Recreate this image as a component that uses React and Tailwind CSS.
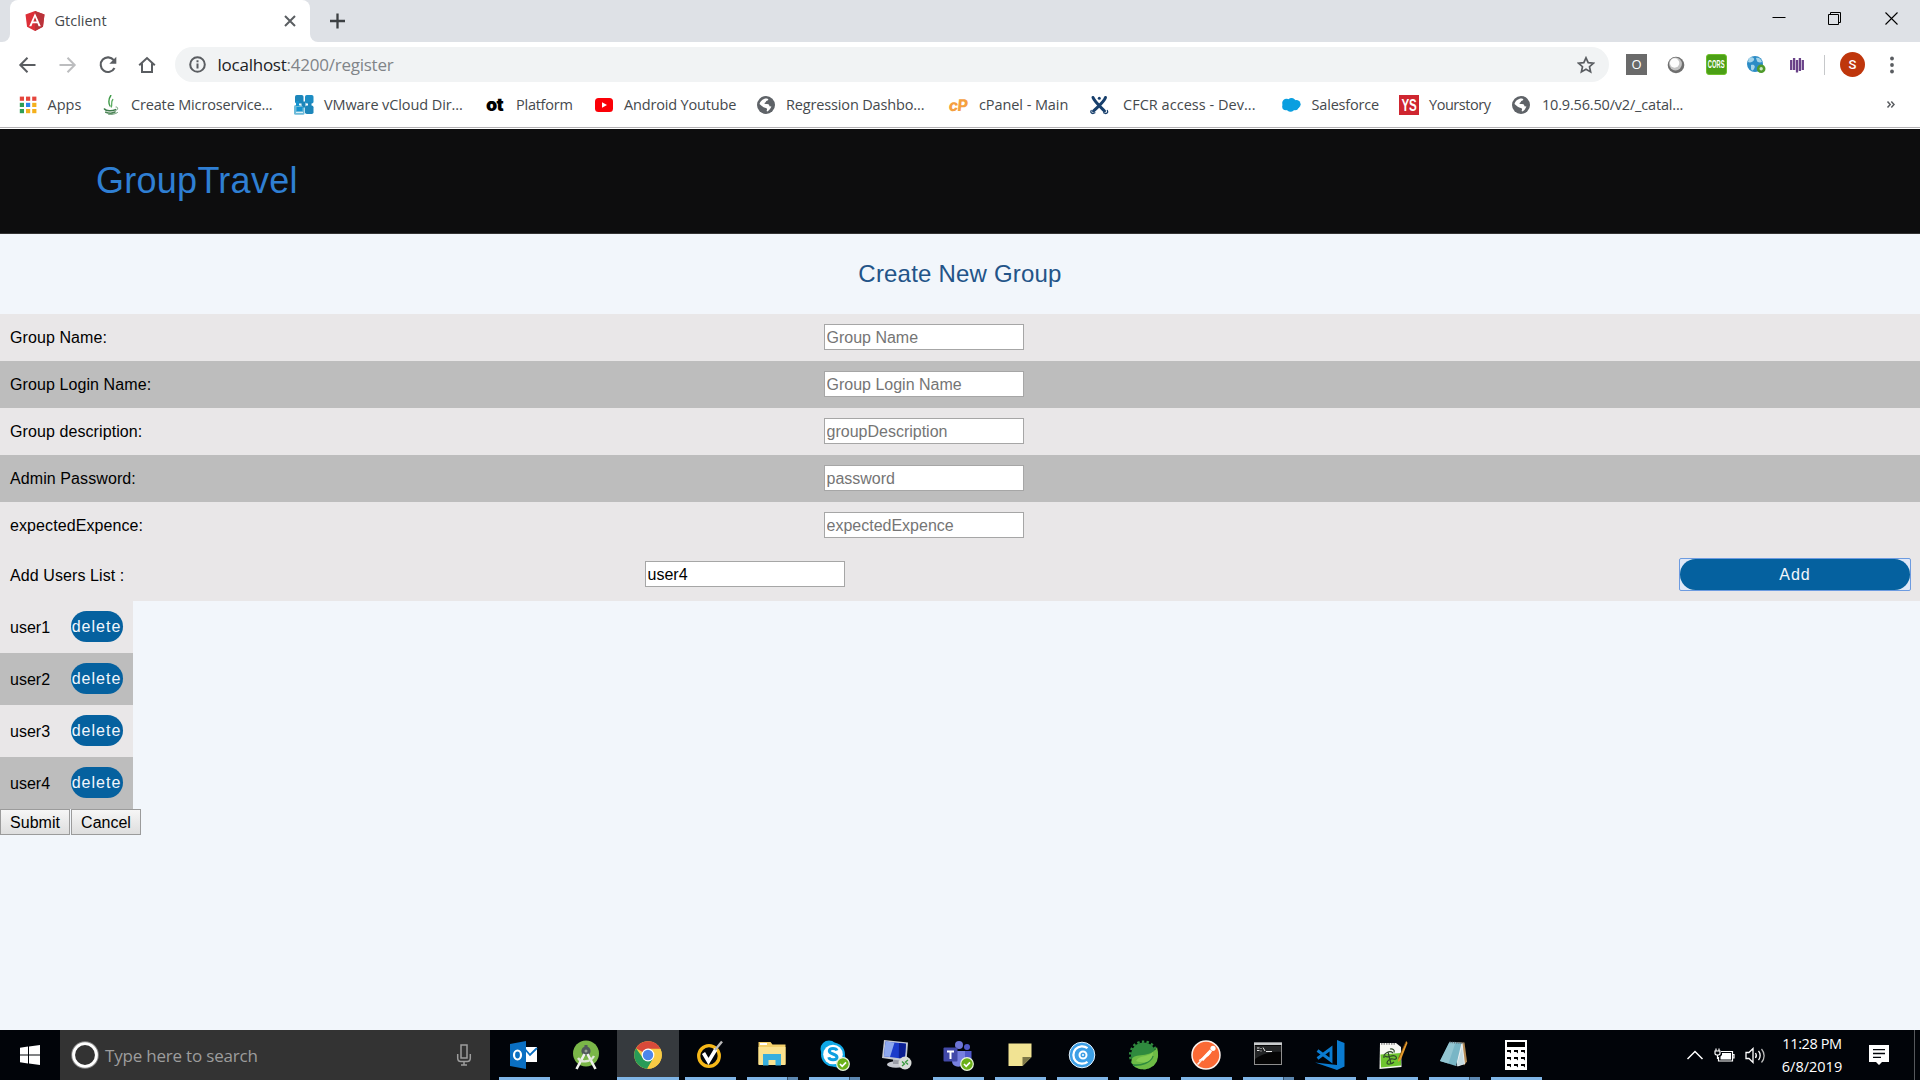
import React from "react";

const SEGOE = "font-['Open_Sans','Noto_Sans',sans-serif]";
const ARIAL = "font-['Liberation_Sans',Arial,sans-serif]";

/* ---------- bookmark icons (20 x 20) ---------- */

const AppsIcon = () => (
  <svg width="20" height="20" viewBox="0 0 20 20" className="shrink-0">
    {[
      ["#e5463c", "#e5463c", "#e5463c"],
      ["#2f9e56", "#2d84ee", "#f4b01c"],
      ["#2f9e56", "#f4b01c", "#f4b01c"],
    ].map((row, r) => row.map((c, i) => <rect key={`${r}${i}`} x={1.8 + i * 6.2} y={1.6 + r * 6.2} width="4.200" height="4.200" fill={c} />))}
  </svg>
);
const JavaIcon = () => (
  <svg width="20" height="20" viewBox="0 0 20 20" fill="none" strokeLinecap="round" className="shrink-0">
    <path d="M9.800.5C7.200 4.500 7 7 9 11" strokeWidth="1.400" stroke="#3f9a48" />
    <path d="M11.800 4.500c-2.300 3-.3 4.500-1.500 7.500" strokeWidth="1.300" stroke="#5cae62" />
    <path d="M3.500 14c1.500 2 7.500 2.300 11 .6" strokeWidth="1.600" stroke="#3d7a4a" />
    <path d="M4.800 17.200c3 1.300 6.800 1.200 9.200-.2" strokeWidth="1.600" stroke="#4d8557" />
    <path d="M15 12c2.500-.3 2.300 2.700-.5 3.900M7.500 19.300c3.500.4 6.500 0 9-1.800" strokeWidth="1" stroke="#6d9c76" />
  </svg>
);
const VmwareIcon = () => (
  <svg width="20" height="20" viewBox="0 0 20 20" className="shrink-0">
    <rect x="1" y="0" width="8.500" height="8.500" rx="1.800" fill="#1d86ba" />
    <rect x="11" y="0" width="8.500" height="8.500" rx="1.800" fill="#1d8dc4" />
    <rect x="11" y="10.500" width="8.500" height="8.500" rx="1.800" fill="#1d86ba" />
    <rect x="0" y="10" width="10.500" height="9.700" rx="1.500" fill="#6dbbda" />
    <path d="M7.500 6.500h4v6h-4zM14 7h3.500v4H14z" fill="#1d86ba" />
    <path d="M2 6h3v5H2zM2.500 12h6v4h-6z" fill="#1593cf" />
    <path d="M2 17.500h7M6 9.500l2 2" stroke="#d9eef7" />
  </svg>
);
const YoutubeIcon = () => (
  <svg width="20" height="20" viewBox="0 0 20 20" className="shrink-0">
    <rect x="1" y="3" width="18" height="14" rx="3.500" fill="#fb0007" />
    <path d="M8 7.200v5.600l5-2.800z" fill="#fff" />
  </svg>
);
const GlobeIcon = () => (
  <svg width="20" height="20" viewBox="0 0 20 20" className="shrink-0">
    <circle cx="10" cy="10" r="9" fill="#5f6368" />
    <path d="M3.500 9C4.500 5.500 8 3 11.500 3.700c1.300.4.8 1.800-.6 2.100-1.200.3-.7 1.500-1.900 1.900-1.400.5-.2 1.600 1.600 1.400 2-.2 2.900.9 2.800 2.200l2 .3c-.5 1.200-1.500 3.400-3.600 4.700-.9.500-1.400-.3-.9-1.200.6-1.200-.4-2.200-1.900-2.300C7.500 12.600 5.500 10.500 3.500 9z" fill="#fff" />
    <path d="M14 5.500c1.500 1.300 2.200 2.600 2.300 4.300-1.300.1-2.600-.9-2.300-4.300z" fill="#5f6368" />
  </svg>
);
const JiraXIcon = () => (
  <svg width="20" height="20" viewBox="0 0 20 20" fill="none" stroke="#173f6c" strokeLinecap="round" className="shrink-0">
    <path d="M4 2.500c1.500 4 6.500 8.500 11.500 13.500M16.500 2.500C15 7 9.500 11 4.500 16" strokeWidth="3" />
    <circle cx="10.300" cy="3.200" r="1.500" fill="#173f6c" stroke="none" />
    <path d="M2.200 15.500c-1.500 2.700 1.500 3.700 3.700 2.300M18.300 15.500c1.500 2.700-1.500 3.700-3.700 2.300" strokeWidth="1.300" />
  </svg>
);
const CloudIcon = () => (
  <svg width="20" height="20" viewBox="0 0 20 20" fill="#0a9fe0" className="shrink-0">
    <circle cx="5.500" cy="8" r="4.300" /><circle cx="10.500" cy="7.200" r="4.200" /><circle cx="15.300" cy="9.200" r="4.300" />
    <circle cx="5" cy="11.500" r="3.800" /><circle cx="9.500" cy="12.500" r="4.300" /><circle cx="14" cy="11.500" r="3.700" />
  </svg>
);
const OtIcon = () => <span className="flex h-5 w-5 shrink-0 items-center justify-center pr-[3px] font-['Inter',sans-serif] text-[18px] leading-none font-black tracking-[-0.6px] text-black">ot</span>;
const CpIcon = () => <span className="flex h-5 w-5 shrink-0 items-center justify-center pr-[2px] font-['Inter',sans-serif] text-[16px] leading-none font-extrabold tracking-[-0.8px] text-[#f5a040]"><span className="-skew-x-6">cP</span></span>;
const YsIcon = () => (
  <span className="flex h-5 w-5 shrink-0 items-center justify-center bg-[#cf2630]">
    <span className="scale-x-[.68] font-['Liberation_Sans',sans-serif] text-[17px] leading-none font-bold text-white">YS</span>
  </span>
);

const bookmarks = [
  { t: "Apps", I: AppsIcon, cls: "w-[83px] gap-[9.500px] tracking-[0px]" },
  { t: "Create Microservice...", I: JavaIcon, cls: "w-[193px] gap-[10px] tracking-[-0.16px]" },
  { t: "VMware vCloud Dir...", I: VmwareIcon, cls: "w-[192px] gap-[10px] tracking-[-0.1px]" },
  { t: "Platform", I: OtIcon, cls: "w-[108px] gap-[10px] tracking-[-0.25px]" },
  { t: "Android Youtube", I: YoutubeIcon, cls: "w-[162px] gap-[10px] tracking-[-0.16px]" },
  { t: "Regression Dashbo...", I: GlobeIcon, cls: "w-[193px] gap-[10px] tracking-[-0.15px]" },
  { t: "cPanel - Main", I: CpIcon, cls: "w-[140px] gap-[10px] tracking-[-0.08px]" },
  { t: "CFCR access - Dev...", I: JiraXIcon, cls: "w-[192px] gap-[14px] tracking-[0.03px]" },
  { t: "Salesforce", I: CloudIcon, cls: "w-[118px] gap-[10.500px] tracking-[-0.18px]" },
  { t: "Yourstory", I: YsIcon, cls: "w-[112px] gap-[10px] tracking-[-0.45px]" },
  { t: "10.9.56.50/v2/_catal...", I: GlobeIcon, cls: "w-[200px] gap-[11px] tracking-[-0.18px]" },
];

/* ---------- browser chrome ---------- */

const AngularIcon = () => (
  <svg width="20" height="20" viewBox="0 0 20 20">
    <path d="M10 0l9.500 3.400L18 15.700 10 20l-8-4.300L.5 3.400z" fill="#dd2f38" />
    <path d="M10 0l9.500 3.400L18 15.700 10 20z" fill="#b9333a" />
    <path d="M10 2.300L4.200 15.200h2.200l1.200-2.900h4.800l1.200 2.900h2.200zm0 4l1.700 4.200H8.300z" fill="#fff" />
  </svg>
);

function TabStrip() {
  return (
    <div className="flex h-[42px] items-stretch bg-[#dee1e6]">
      <div className="w-[10px] bg-white"><div className="h-full rounded-br-lg bg-[#dee1e6]" /></div>
      <div className="flex w-[300px] items-center rounded-t-lg bg-white pl-[15px]">
        <AngularIcon />
        <span className="ml-[9.500px] grow text-[14.500px] leading-5 text-[#45494d]">Gtclient</span>
        <svg width="12" height="12" viewBox="0 0 12 12" className="mr-[14px]" stroke="#5a5e62" strokeWidth="2"><path d="M1 1l10 10M11 1L1 11" /></svg>
      </div>
      <div className="w-[10px] bg-white"><div className="h-full rounded-bl-lg bg-[#dee1e6]" /></div>
      <div className="flex grow items-center pl-[9px]">
        <svg width="16" height="16" viewBox="0 0 16 16" stroke="#3c4043" strokeWidth="2.300"><path d="M8.500 .5v15M1 8h15" /></svg>
      </div>
      <div className="flex h-[38px] items-center pr-[21px] text-black">
        <svg width="14" height="14" viewBox="0 0 14 14" className="mr-[42px]" stroke="currentColor"><path d="M.5 5.500h13" /></svg>
        <svg width="14" height="14" viewBox="0 0 14 14" className="mr-[43px]" fill="none" stroke="currentColor"><path d="M.5 2.500h10v10H.5zM2.500 2.500v-2h10v10h-2" /></svg>
        <svg width="14" height="14" viewBox="0 0 14 14" stroke="currentColor" strokeWidth="1.100"><path d="M.5 .5l12 12M12.500 .5l-12 12" /></svg>
      </div>
    </div>
  );
}

function Toolbar() {
  return (
    <div className="flex h-[45px] items-center bg-white">
      <svg width="18" height="18" viewBox="0 0 18 18" className="ml-[18px]" fill="none" stroke="#5a5d61" strokeWidth="2"><path d="M17.500 9H3M9.500 1.800L2.300 9l7.200 7.200" /></svg>
      <svg width="18" height="18" viewBox="0 0 18 18" className="ml-[23px]" fill="none" stroke="#bcbdbf" strokeWidth="2"><path d="M.5 9h15M8.500 1.800L15.700 9l-7.200 7.200" /></svg>
      <svg width="18" height="18" viewBox="0 0 18 18" className="ml-[22px]" fill="none" stroke="#5a5d61" strokeWidth="2.100">
        <path d="M14.800 4.200A7.300 7.300 0 1 0 15.500 12" />
        <path d="M17.300 .8v7h-7z" fill="#5a5d61" stroke="none" />
      </svg>
      <svg width="18" height="18" viewBox="0 0 18 18" className="ml-[21px]" fill="none" stroke="#5a5d61" strokeWidth="2"><path d="M1.200 9.300L9 2l7.800 7.300M4 7.500V16h10V7.500" /></svg>
      <div className="ml-[19px] flex h-[35px] w-[1434px] items-center rounded-full bg-[#f1f3f4] pr-[14px] pl-[14px]">
        <svg width="17" height="17" viewBox="0 0 17 17" fill="none" stroke="#5a5d61" strokeWidth="2"><circle cx="8.500" cy="8.500" r="7.300" /><path d="M8.500 7.500v5M8.500 4.300v2" /></svg>
        <span className="ml-[11.500px] grow text-[17px] leading-6 tracking-[-0.24px] text-[#808488]"><span className="text-[#202124]">localhost</span>:4200/register</span>
        <svg width="18" height="18" viewBox="0 0 18 18" fill="none" stroke="#5a5d61" strokeWidth="1.700"><path d="M9 1.800l2.200 4.900 5.200.5-3.900 3.500 1.100 5.200L9 13.200l-4.600 2.700 1.100-5.200L1.600 7.200l5.200-.5z" /></svg>
      </div>
      <span className="ml-[17px] flex h-[21px] w-[21px] items-center justify-center bg-[#6a6a6a] text-[13px] leading-none text-white">O</span>
      <svg width="18" height="18" viewBox="0 0 18 18" className="ml-[20px]">
        <circle cx="9" cy="9" r="8.300" fill="#6f6f6f" /><circle cx="8.500" cy="8" r="6.400" fill="#c4c4c4" /><circle cx="7.600" cy="7" r="4.700" fill="#fdfdfd" />
      </svg>
      <span className="ml-[21px] flex h-[21px] w-[21px] items-center justify-center rounded-[3px] border border-[#6fbf2c] bg-[#4ba015]">
        <span className="scale-x-[.55] font-['Liberation_Sans',sans-serif] text-[10.500px] leading-none font-bold text-white">CORS</span>
      </span>
      <svg width="20" height="20" viewBox="0 0 20 20" className="ml-[19px]">
        <circle cx="9" cy="9" r="8" fill="#2c8cc6" />
        <path d="M3 3c3-2 6 0 5 2S4 8 2 7zM10 3c3-1 5 1 6 4-2 1-5 0-5-1zM5 10c3-1 5 1 3 4s-3 1-3-1z" fill="#a5d4ea" />
        <circle cx="15.200" cy="13.700" r="3" fill="#cfe6c4" stroke="#4f9a2b" strokeWidth="2.600" />
      </svg>
      <svg width="14" height="16" viewBox="0 0 14 16" className="ml-[24px]" stroke="#6a4288" strokeWidth="2.300"><path d="M1.200 3v10M4.100 1v12M7 3v12.500M9.900 1v13M12.800 3v10" /></svg>
      <span className="ml-[20px] h-5 w-px bg-[#c6c8ca]" />
      <span className="ml-[15px] flex h-[25px] w-[25px] items-center justify-center rounded-full bg-[#bf360c] font-['Roboto',sans-serif] text-[13px] font-medium text-white">S</span>
      <svg width="4" height="18" viewBox="0 0 4 18" className="ml-[25px]" fill="#5a5d61"><circle cx="2" cy="2.500" r="1.900" /><circle cx="2" cy="9" r="1.900" /><circle cx="2" cy="15.500" r="1.900" /></svg>
    </div>
  );
}

function Bookmarks() {
  return (
    <div className="flex h-[41px] items-center border-b border-[#b3b1b4] bg-white pb-[4px] pl-[18px] text-[14.500px] leading-5 text-[#45494d]">
      {bookmarks.map(({ t, I, cls }) => (
        <div key={t} className={`flex shrink-0 items-center whitespace-nowrap ${cls}`}><I />{t}</div>
      ))}
      <svg width="10" height="9" viewBox="0 0 10 9" className="mt-[-2px] mr-[24px] ml-auto" fill="none" stroke="#5a5d61" strokeWidth="1.500"><path d="M1.500 1.500l2.700 3-2.700 3M5.300 1.500l2.700 3-2.700 3" /></svg>
    </div>
  );
}

/* ---------- page ---------- */

const fields = [
  ["Group Name:", "Group Name"],
  ["Group Login Name:", "Group Login Name"],
  ["Group description:", "groupDescription"],
  ["Admin Password:", "password"],
  ["expectedExpence:", "expectedExpence"],
];
const inputCls = "h-[26px] w-[200px] border border-[#a6a6a6] bg-white px-[1.500px] pt-px text-[16px] leading-[22px] text-black placeholder:text-[#757575] outline-none";
const pill = "h-[31px] rounded-full bg-[#05619f] text-[16px] leading-[30px] tracking-[1px] text-[#f2f6fc]";
const plainBtn = "h-[26px] border border-[#9b9b9b] bg-linear-to-b from-[#f6f6f6] to-[#dedede] pt-px text-center text-[16px] leading-[23px] text-black";

function Page() {
  return (
    <main className={`flex grow flex-col border-t border-white bg-[#f2f6fb] text-[16px] text-black ${ARIAL}`}>
      <header className="h-[105px] border-b border-[#333] bg-[#0d0d0e] pt-[32px] pl-[96px]">
        <h1 className="text-[36px] leading-[40px] tracking-[0.27px] text-[#2f7fd3]">GroupTravel</h1>
      </header>
      <h2 className="h-20 pt-[26px] text-center text-[24px] leading-[28px] tracking-[0.2px] text-[#235488]">Create New Group</h2>
      <div>
        {fields.map(([label, ph]) => (
          <div key={label} className="flex h-[47px] items-center bg-[#e9e7e8] pl-[10px] even:bg-[#bdbdbd]">
            <label className="w-[814px] tracking-[0.09px]">{label}</label>
            <input className={`${inputCls} mb-px`} placeholder={ph} />
          </div>
        ))}
      </div>
      <div className="flex h-[52px] items-center bg-[#e9e7e8] pr-[9px] pl-[10px]">
        <label className="w-[635px] pt-px tracking-[0.09px]">Add Users List :</label>
        <input className={`${inputCls} mb-[2px]`} defaultValue="user4" />
        <div className="mr-0 mb-[1px] ml-auto h-[33px] w-[232px] rounded-[2px] border border-[#6d9be0] bg-[#dfe8f7]">
          <button className={`${pill} block w-full`}>Add</button>
        </div>
      </div>
      <div className="w-[133px]">
        {["user1", "user2", "user3", "user4"].map((u) => (
          <div key={u} className="flex h-[52px] items-center justify-between bg-[#e9e7e8] px-[10px] even:bg-[#bdbdbd]">
            <span className="pt-[2px]">{u}</span>
            <button className={`${pill} mb-px w-[52px] pr-px`}>delete</button>
          </div>
        ))}
      </div>
      <div className="flex gap-px">
        <button className={`${plainBtn} w-[70px]`}>Submit</button>
        <button className={`${plainBtn} w-[70px]`}>Cancel</button>
      </div>
    </main>
  );
}

/* ---------- taskbar icons (32 x 32) ---------- */

const Svg = ({ children, ...p }) => <svg width="32" height="32" viewBox="0 0 32 32" fill="none" {...p}>{children}</svg>;
const Tick = ({ x, y }) => (
  <g><circle cx={x} cy={y} r="6.300" fill="#6bb018" stroke="#e9f5dc" strokeWidth="1.200" /><path d={`M${x - 3} ${y}l2.200 2.300 3.800-4`} stroke="#fff" strokeWidth="1.700" /></g>
);

const Outlook = () => (
  <Svg>
    <rect x="16" y="8" width="13" height="15" fill="#fff" /><path d="M16 9l6 7 7-7" stroke="#0a6fc2" strokeWidth="1.800" />
    <path d="M2 5l16-3v28L2 27z" fill="#0a6fc2" /><ellipse cx="9.500" cy="16" rx="3.500" ry="4.500" stroke="#fff" strokeWidth="2.200" />
  </Svg>
);
const AndroidStudio = () => (
  <Svg>
    <circle cx="16" cy="14.500" r="13" fill="#7ab648" />
    <circle cx="16" cy="12" r="4.600" fill="#50595a" /><circle cx="16" cy="12" r="1.500" fill="#98a294" /><rect x="14.500" y="6" width="3" height="4" fill="#50595a" />
    <path d="M14.500 15L6.500 30M17.500 15l8 15" stroke="#f0f2ee" strokeWidth="2.600" /><path d="M8 19c3 4.500 12 5 16-2" stroke="#dfe6d8" strokeWidth="2.400" />
  </Svg>
);
const Chrome = () => (
  <Svg>
    <circle cx="16" cy="16" r="13.800" fill="#f8cb45" />
    <path d="M16 16L4 9.200A13.800 13.800 0 0 1 28.500 10H16z" fill="#d94a3a" />
    <path d="M4 9.200A13.800 13.800 0 0 0 15 29.800L21.500 19 10.500 18.500z" fill="#289b57" />
    <path d="M16 9.800h12.400A13.800 13.800 0 0 1 15.500 29.800L21.500 19z" fill="#f8cb45" />
    <circle cx="16" cy="16" r="6.400" fill="#fff" /><circle cx="16" cy="16" r="5.200" fill="#4c86ea" />
  </Svg>
);
const Norton = () => (
  <Svg>
    <circle cx="15" cy="17" r="10.300" stroke="#f6b818" strokeWidth="3.300" />
    <path d="M9.500 14l5 8.500L22 10" stroke="#fff" strokeWidth="3.600" /><path d="M21 11l7-8.500" stroke="#b9b9b9" strokeWidth="2.400" />
  </Svg>
);
const Folder = () => (
  <Svg>
    <path d="M2.500 3h12l2 2.500H29.500V25h-27z" fill="#f3cf6a" /><path d="M2.500 8h27v18h-27z" fill="#fbe28f" /><rect x="4" y="4" width="7" height="2" fill="#fff" />
    <path d="M7 15h18v11.500h-5.500V21h-7v5.500H7z" fill="#38aede" />
  </Svg>
);
const Skype = () => (
  <Svg>
    <circle cx="11" cy="10" r="8.500" fill="#0fa8e6" /><circle cx="19" cy="20" r="8.500" fill="#0fa8e6" /><circle cx="15" cy="15.500" r="12" fill="#0fa8e6" />
    <circle cx="15" cy="15.500" r="9.800" fill="#fff" />
    <path d="M19 11.500c-.8-2.500-7.500-3-7.700.5-.1 3.600 7.700 2.300 7.700 6.200 0 3.500-7.500 3.500-8.200 0" stroke="#0f9fe0" strokeWidth="3" />
    <Tick x={25} y={25} />
  </Svg>
);
const Remote = () => (
  <Svg>
    <ellipse cx="16" cy="25.500" rx="9" ry="3.200" fill="#c8cbd2" /><path d="M13 19h6v6h-6z" fill="#9a9da6" />
    <path d="M4 1l24 2.500-1.500 19L2 19z" fill="#c4c8d2" /><path d="M5.500 2.500L26 4.800 24.800 20 4 17.200z" fill="#1c3ccb" /><path d="M5.500 2.500l9 1L10 18l-6-.8z" fill="#8fa9ee" /><path d="M19 4l7 .8L24.800 20l-6-1z" fill="#0c1f92" />
    <circle cx="25" cy="24" r="6.500" fill="#d9dcd9" /><path d="M22 22.500l2.500 2.500-2.500 2M28 21l-2.500 2 2.500 2.500" stroke="#3a9a3e" strokeWidth="1.300" />
  </Svg>
);
const Teams = () => (
  <Svg>
    <circle cx="17" cy="6" r="4" fill="#6d75d6" /><circle cx="25" cy="8" r="3" fill="#5059c9" />
    <path d="M20 12h9.500v8c0 5-5 6-7.500 4z" fill="#5059c9" /><path d="M10 12h13v10c0 7-13 8-13 0z" fill="#7780e0" />
    <rect x="1.500" y="8.500" width="14" height="14" rx="1" fill="#4249a8" /><path d="M5 12.500h7M8.500 12.500V20" stroke="#fff" strokeWidth="2" />
    <Tick x={25} y={25} />
  </Svg>
);
const Sticky = () => <Svg><path d="M4.500 4.500h23V18l-9 9h-14z" fill="#f1e393" /><path d="M18.500 27v-9h9z" fill="#7d7748" /></Svg>;
const CircleC = () => (
  <Svg>
    <circle cx="16" cy="16" r="12.800" fill="#3c9fe6" stroke="#e3f1fb" strokeWidth="1" />
    <path d="M21.500 9.200a8.700 8.700 0 1 0 0 13.600" stroke="#fff" strokeWidth="2.300" /><circle cx="17" cy="16" r="3.500" stroke="#fff" strokeWidth="2" /><circle cx="17" cy="16" r="1" fill="#fff" />
  </Svg>
);
const Spring = () => (
  <Svg>
    <circle cx="15.500" cy="16" r="12.500" fill="#2f8a3e" /><circle cx="15.500" cy="16" r="13.400" stroke="#2f8a3e" strokeWidth="2.400" strokeDasharray="2.400 2.300" />
    <path d="M29 8c2.500 10 1 19-10 22C12 31.500 3 28 3.500 21c2-8 20-1 25.500-13z" fill="#6dbb45" /><path d="M5 26c8 1 17-2 20-9" stroke="#2f8a3e" strokeWidth="1.800" /><path d="M8 22c3-6 13-4 17-9 0 8-6 13-17 9z" fill="#83cb52" />
  </Svg>
);
const Postman = () => (
  <Svg>
    <circle cx="16" cy="16" r="14" fill="#fb6a35" stroke="#fdf3ee" strokeWidth="1.500" />
    <path d="M7.500 25.500L19 13" stroke="#fdeee6" strokeWidth="1.800" /><path d="M12 21l9-9.500" stroke="#fff" strokeWidth="3.200" /><circle cx="23" cy="9.300" r="2.600" fill="#fff" /><path d="M9 21.500l9-5 2.500-3" stroke="#fff" strokeWidth="1.200" />
  </Svg>
);
const Cmd = () => (
  <Svg>
    <rect x="2.500" y="4" width="27" height="21.500" fill="#050505" stroke="#8e8e8e" /><rect x="2" y="3.500" width="28" height="2.500" fill="#c9ccce" />
    <path d="M3 7h26v6C19 12 9 15 3 20z" fill="#232526" /><path d="M5 9h2.500M5 11.500h2.500M9 9v1M9 11.500v1M11 8.500l2 3.500M14 12.500h6" stroke="#e6e6e6" strokeWidth="1" />
  </Svg>
);
const VsCode = () => (
  <Svg>
    <path d="M23 1l7.500 3v23.500L23 31 1 23.500 23 26z" fill="#0a7bd0" />
    <path d="M3.500 11.500L17 21.500V9.500L3.500 19.500" stroke="#0a7bd0" strokeWidth="2.900" />
  </Svg>
);
const NotepadPP = () => (
  <Svg>
    <path d="M4 4h16l5 4 .5 20L3.500 30z" fill="#f7f8f3" /><path d="M4.500 15.500L25 14v12.500l-20 2z" fill="#6fc52f" /><path d="M5 4.800h15" stroke="#929292" strokeWidth="1.800" strokeDasharray="1.500 1" />
    <path d="M8 19c-1-5 6-8 9-5M14 10c3-.5 5 1 4 3.500M9 17c3 3 7-2 10 0s1 4-2 3-6 2-6 4 5 1 7-1M12 13l3 12" stroke="#2f4a2a" strokeWidth="1.200" />
    <path d="M30.500 2L22.500 19l-.5 4 3-2.500L31.500 4z" fill="#e59a2c" /><path d="M30 2.500l-7.500 17" stroke="#7a4a12" strokeWidth=".8" />
  </Svg>
);
const Notepad = () => (
  <Svg>
    <path d="M20 3.500h6.500l2.500 19-3 4z" fill="#b28a55" /><path d="M14 3l10.500 1L27 25l-7.500 2.500z" fill="#e8eff1" />
    <path d="M11.500 3l12 1L18 27 2 22z" fill="#79b6c6" /><path d="M11.500 3l6 .5-7 21L2 22z" fill="#93c6d2" /><path d="M18.500 27L24 8l2 17z" fill="#c5dce2" /><path d="M11.500 3.300l14 1" stroke="#67737a" strokeWidth="1.600" strokeDasharray="1.200 1" />
  </Svg>
);
const Calc = () => (
  <Svg>
    <rect x="5" y="1" width="22" height="30" fill="#fff" /><rect x="7" y="3" width="18" height="5" fill="#000" />
    {[11, 18, 25].map((y) => [7, 14, 21].map((x) => <path key={`${x}${y}`} d={`M${x} ${y}h4v3.500l-1.500-1.500h-2.500z`} fill="#000" />))}
  </Svg>
);

const tasks = [
  [Outlook, 1], [AndroidStudio, 0], [Chrome, 3], [Norton, 1], [Folder, 2], [Skype, 2], [Remote, 0], [Teams, 1], [Sticky, 1],
  [CircleC, 1], [Spring, 1], [Postman, 1], [Cmd, 2], [VsCode, 1], [NotepadPP, 1], [Notepad, 2], [Calc, 1],
];

function Taskbar() {
  return (
    <footer className="flex h-[50px] shrink-0 items-stretch bg-[#010409] text-white">
      <div className="flex w-[60px] items-center justify-center">
        <svg width="20" height="20" viewBox="0 0 20 20" fill="#fff"><path d="M0 2.800l8-1.200V9.500H0zM9 1.400L20 0v9.500H9zM0 10.500h8v7.900L0 17.200zM9 10.500h11V20L9 18.600z" /></svg>
      </div>
      <div className="flex w-[430px] items-center bg-[#333]">
        <svg width="30" height="30" viewBox="0 0 30 30" className="ml-[10px]" fill="none"><circle cx="15" cy="15" r="12.300" stroke="#8a8a8a" strokeWidth="3" /><circle cx="15" cy="15" r="11.400" stroke="#fff" strokeWidth="2.900" /></svg>
        <span className="mt-px ml-[5px] grow text-[17px] leading-6 tracking-[-0.2px] text-[#9d9d9d]">Type here to search</span>
        <svg width="16" height="22" viewBox="0 0 16 22" className="mr-[18px]" fill="none" stroke="#9d9d9d" strokeWidth="1.500"><path d="M5 1h6v13H5zM1.700 10v4c0 2.500 1.300 3.500 3 3.500h6.600c1.700 0 3-1 3-3.500v-4M8 17.500V21M5 21h6" /></svg>
      </div>
      <div className="flex pl-[3px]">
        {tasks.map(([I, kind], i) => (
          <div key={i} className={`flex w-[62px] flex-col items-center ${kind === 3 ? "bg-[#363a3e]" : ""}`}>
            <div className="flex h-[47px] items-center pt-[3px]"><I /></div>
            {kind > 0 && (
              <div className={`flex h-[3px] bg-[#7fb5e6] ${kind === 3 ? "w-full" : "w-[51px]"}`}>
                {kind === 2 && <div className="ml-auto h-full w-[11px] border-l border-[#35506a] bg-[#5c87b0]" />}
              </div>
            )}
          </div>
        ))}
      </div>
      <div className="ml-auto flex items-center">
        <svg width="18" height="10" viewBox="0 0 18 10" fill="none" stroke="#fff" strokeWidth="1.500"><path d="M1.500 9L9 1.500 16.500 9" /></svg>
        <svg width="21" height="15" viewBox="0 0 21 15" className="ml-[10px]" fill="none" stroke="#fff" strokeWidth="1.200">
          <path d="M7 3.500h11.500v9.500H4.500V9M18.500 6.500h1.500v3.500h-1.500M2 .5v2.500M5 .5v2.500M1 3h5v2.500c0 2-5 2-5 0zM3.500 7v4" /><path d="M8 5h9v6.500H6.500V8.500L8 7z" fill="#fff" stroke="none" />
        </svg>
        <svg width="22" height="19" viewBox="0 0 22 19" className="ml-[10px]" fill="none" stroke="#fff" strokeWidth="1.300">
          <path d="M1 6.500h3l4-4v14l-4-4H1zM10.500 7c1 1.500 1 3.500 0 5M13.500 5c2.200 2.500 2.200 6.500 0 9" /><path d="M16.500 3c3.500 4 3.500 9.500 0 13.500" stroke="#bbb" />
        </svg>
        <div className="ml-[10px] flex w-[70px] flex-col items-center text-[14.500px] leading-[23px] whitespace-nowrap">
          <span className="tracking-[-0.4px]">11:28 PM</span>
          <span>6/8/2019</span>
        </div>
        <svg width="20" height="20" viewBox="0 0 20 20" className="ml-[22px]"><path d="M0 0h20v17h-7l-3 3-3-3H0z" fill="#fff" /><path d="M4 4.700h12M4 8.500h12M4 12.300h8" stroke="#010409" strokeWidth="1.300" /></svg>
        <div className="mr-[5px] ml-[25px] h-[50px] w-px bg-[#55585c]" />
      </div>
    </footer>
  );
}

export default function App() {
  return (
    <div className={`flex h-[1080px] w-[1920px] flex-col overflow-hidden bg-white ${SEGOE}`}>
      <TabStrip />
      <Toolbar />
      <Bookmarks />
      <Page />
      <Taskbar />
    </div>
  );
}
